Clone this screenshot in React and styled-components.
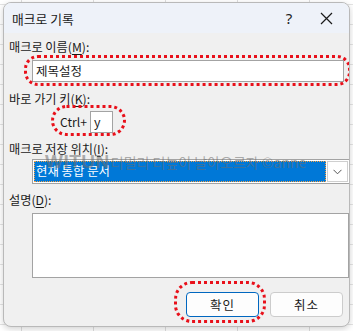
import styled, {createGlobalStyle} from "styled-components";

const GlobalStyle = createGlobalStyle`
    html, body {
        margin: 0;
        padding: 0;
    }
    body {
        width: 353px;
        height: 331px;
        overflow: hidden;
        background-color: #ffffff;
        background-image:
            linear-gradient(to right, #dedede 1px, transparent 1px),
            linear-gradient(to bottom, #e4e4e4 1px, transparent 1px);
        background-size: 72px 100%, 100% 20px;
        background-position: 21px 0, 0 4px;
        font-family: "Noto Sans CJK KR", "Noto Sans", sans-serif;
        color: #1a1a1a;
    }
`;

const Dialog = styled.div`
    position: relative;
    margin: 2px 0 0 3px;
    width: 345px;
    height: 323px;
    border: 1px solid #b9b9b9;
    border-radius: 8px;
    background: #f0f0f0;
    box-shadow: 0 2px 6px rgba(0, 0, 0, 0.18);
    overflow: hidden;
    display: flex;
    flex-direction: column;
`;

const TitleBar = styled.div`
    height: 30px;
    flex: none;
    background: #eef2f9;
    display: flex;
    align-items: center;
    padding-left: 8px;
`;

const Title = styled.div`
    flex: 1;
    font-size: 12.8px;
    line-height: 16px;
    padding-top: 1px;
`;

const TitleButton = styled.div`
    width: ${p => p.w}px;
    height: 30px;
    display: flex;
    align-items: center;
    justify-content: center;
    font-family: "Noto Sans", sans-serif;
    font-size: 15px;
    color: #222;
`;

const Body = styled.div`
    flex: 1;
    display: flex;
    flex-direction: column;
    padding: 6px 0 0 5px;
`;

const Label = styled.div`
    font-size: 12.2px;
    line-height: 16px;
    height: 16px;
    margin-top: ${p => p.mt || 0}px;
    u {
        text-decoration: underline;
        text-underline-offset: 2px;
    }
`;

const Indent = styled.div`
    margin-left: 23px;
    position: relative;
`;

const TextBox = styled.div`
    width: ${p => p.w}px;
    height: ${p => p.h}px;
    flex: none;
    box-sizing: border-box;
    border: 1px solid #a3a3a3;
    background: #fff;
    font-size: 12.5px;
    line-height: ${p => p.h - 2}px;
    padding-left: 3px;
    margin-top: ${p => p.mt || 0}px;
`;

const Oval = styled.div`
    position: absolute;
    left: ${p => p.l}px;
    top: ${p => p.t}px;
    width: ${p => p.w}px;
    height: ${p => p.h}px;
    box-sizing: border-box;
    border: 3px dotted #e8101a;
    border-radius: ${p => p.r}px;
    pointer-events: none;
`;

const ShortcutRow = styled.div`
    display: flex;
    align-items: center;
    margin: 4px 0 0 51px;
    position: relative;
    height: 22px;
`;

const CtrlText = styled.span`
    font-size: 12.2px;
    width: 30px;
    flex: none;
    white-space: nowrap;
`;

const SelectBox = styled.div`
    margin-top: 2px;
    width: 318px;
    height: 25px;
    box-sizing: border-box;
    border: 1px solid #a3a3a3;
    background: #fff;
    display: flex;
    align-items: stretch;
    padding: 1px;
    position: relative;
`;

const Selected = styled.div`
    flex: 1;
    background: #0078d7;
    outline: 1px dotted #f7a346;
    outline-offset: -1px;
    color: #fff;
    font-size: 12.4px;
    line-height: 20px;
    padding-left: 2px;
    margin-right: 1px;
`;

const DropButton = styled.div`
    width: 19px;
    border: 1px solid #cfcfcf;
    display: flex;
    align-items: center;
    justify-content: center;
    background: #fff;
`;

const Watermark = styled.div`
    position: absolute;
    left: 13px;
    top: -4px;
    display: flex;
    align-items: baseline;
    line-height: 18px;
    color: rgba(110, 110, 110, 0.55);
    white-space: nowrap;
    pointer-events: none;
`;

const WatermarkBrand = styled.span`
    font-family: "Liberation Sans", sans-serif;
    font-weight: bold;
    font-size: 19px;
    letter-spacing: 0.5px;
`;

const WatermarkText = styled.span`
    font-size: 14px;
    margin-left: 1px;
`;

const Footer = styled.div`
    display: flex;
    justify-content: flex-end;
    gap: 11px;
    margin: 14px 6px 0 0;
    position: relative;
`;

const Button = styled.div`
    width: 73px;
    height: 25px;
    box-sizing: border-box;
    border: 1px solid ${p => p.primary ? "#0067c0" : "#cccccc"};
    border-radius: 4px;
    background: #fdfdfd;
    display: flex;
    align-items: center;
    justify-content: center;
    font-size: 12.5px;
    letter-spacing: 1px;
`;

export default function App() {
    return (
        <>
            <GlobalStyle />
            <Dialog>
                <TitleBar>
                    <Title>매크로 기록</Title>
                    <TitleButton w={28}>?</TitleButton>
                    <TitleButton w={46}>
                        <svg width="13" height="13" viewBox="0 0 13 13">
                            <path d="M1 1L12 12M12 1L1 12" stroke="#1a1a1a" strokeWidth="1.2" fill="none" />
                        </svg>
                    </TitleButton>
                </TitleBar>
                <Body>
                    <Label>매크로 이름(<u>M</u>):</Label>
                    <Indent>
                        <TextBox w={312} h={22} mt={5}>제목설정</TextBox>
                        <Oval l={-8} t={0} w={327} h={31} r={14} />
                    </Indent>
                    <Label mt={9}>바로 가기 키(<u>K</u>):</Label>
                    <ShortcutRow>
                        <CtrlText>Ctrl+</CtrlText>
                        <TextBox w={23} h={22}>y</TextBox>
                        <Oval l={-9} t={-6} w={75} h={31} r={16} />
                    </ShortcutRow>
                    <Label mt={8}>매크로 저장 위치(<u>I</u>):</Label>
                    <Indent>
                        <SelectBox>
                            <Selected>현재 통합 문서</Selected>
                            <DropButton>
                                <svg width="9" height="6" viewBox="0 0 9 6">
                                    <path d="M0.5 0.8L4.5 4.8L8.5 0.8" stroke="#555" strokeWidth="1" fill="none" />
                                </svg>
                            </DropButton>
                        </SelectBox>
                        <Watermark>
                            <WatermarkBrand>WITUN</WatermarkBrand>
                            <WatermarkText>더멀리 더높이 날아오르자 ©anne</WatermarkText>
                        </Watermark>
                    </Indent>
                    <Label mt={8}>설명(<u>D</u>):</Label>
                    <Indent>
                        <TextBox w={317} h={65} mt={5} />
                    </Indent>
                    <Footer>
                        <Button primary>확인</Button>
                        <Button>취소</Button>
                        <Oval l={165} t={-11} w={92} h={42} r={18} />
                    </Footer>
                </Body>
            </Dialog>
        </>
    );
}
